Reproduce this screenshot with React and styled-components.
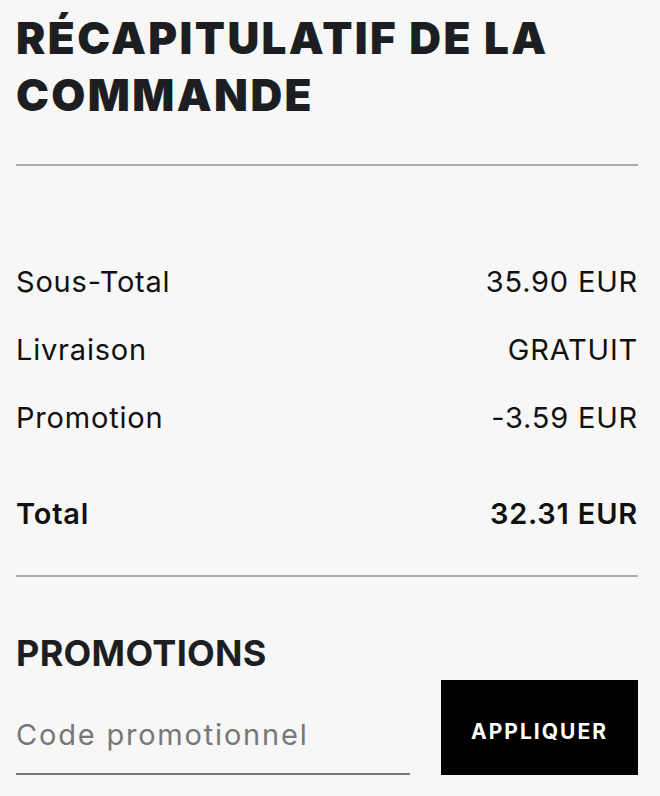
import React from 'react'
import styled, { createGlobalStyle } from 'styled-components'

const GlobalStyle = createGlobalStyle`
  html, body {
    margin: 0;
    padding: 0;
    background: #f7f7f7;
  }
  body {
    font-family: Inter, "Open Sans", sans-serif;
    font-variant-ligatures: none;
    color: #1d1e22;
  }
`

const Wrapper = styled.div`
  width: 622px;
  padding: 10px 22px 0 16px;
`

const Title = styled.h1`
  margin: 0;
  font-size: 44px;
  line-height: 57px;
  font-weight: 900;
  letter-spacing: 2.4px;
  text-transform: uppercase;
  color: #1d1e22;
`

const Divider = styled.hr`
  border: none;
  height: 2px;
  margin: ${p => p.$margin || '0'};
  background: #acacac;
`

const Rows = styled.div`
  display: flex;
  flex-direction: column;
  margin-top: 81px;
`

const Row = styled.div`
  display: flex;
  justify-content: space-between;
  align-items: center;
  height: ${p => p.$height || '68px'};
  font-size: 29px;
  letter-spacing: 0.8px;
  font-weight: ${p => (p.$bold ? 600 : 400)};
  color: #111;
`

const SubTitle = styled.h2`
  margin: 56px 0 0 0;
  font-size: 36px;
  line-height: 40px;
  font-weight: 700;
  letter-spacing: 0.3px;
  color: #1d1e22;
`

const PromoForm = styled.div`
  display: flex;
  align-items: flex-end;
  justify-content: space-between;
  margin-top: 7px;
`

const Input = styled.input`
  width: 394px;
  height: 70px;
  box-sizing: border-box;
  border: none;
  border-bottom: 2px solid #777;
  background: transparent;
  font-family: Inter, "Open Sans", sans-serif;
  font-size: 29px;
  letter-spacing: 1.8px;
  padding: 0 0 10px 0;
  color: #111;
  outline: none;
  &::placeholder {
    color: #777;
  }
`

const Button = styled.button`
  width: 197px;
  height: 95px;
  padding: 8px 0 0 0;
  background: #000;
  color: #fff;
  border: none;
  font-family: Inter, "Open Sans", sans-serif;
  font-size: 21px;
  font-weight: 700;
  letter-spacing: 2px;
  text-transform: uppercase;
`

export default function App() {
  return (
    <>
      <GlobalStyle />
      <Wrapper>
        <Title>Récapitulatif de la commande</Title>
        <Divider $margin="40px 0 0 0" />
        <Rows>
          <Row><span>Sous-Total</span><span>35.90 EUR</span></Row>
          <Row><span>Livraison</span><span>GRATUIT</span></Row>
          <Row><span>Promotion</span><span>-3.59 EUR</span></Row>
          <Row $bold $height="124px"><span>Total</span><span>32.31 EUR</span></Row>
        </Rows>
        <Divider />
        <SubTitle>PROMOTIONS</SubTitle>
        <PromoForm>
          <Input placeholder="Code promotionnel" />
          <Button>Appliquer</Button>
        </PromoForm>
      </Wrapper>
    </>
  )
}
